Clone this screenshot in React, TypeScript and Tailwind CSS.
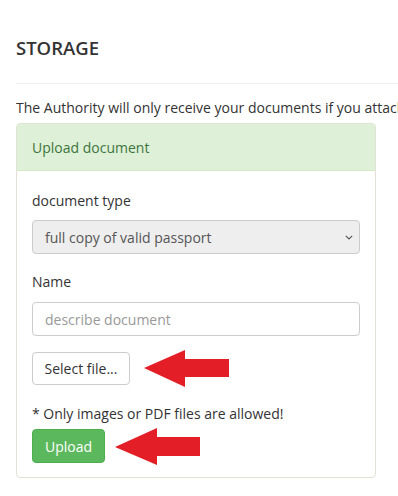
import React from "react";

export default function App() {
  return (
    <div
      className="w-[398px] h-[496px] overflow-hidden bg-white text-[#333]"
      style={{ fontFamily: '"Open Sans", "Liberation Sans", sans-serif' }}
    >
      <div className="pl-4">
        <h2 className="pt-[38px] text-[18.5px] leading-[19px] font-semibold text-[#333]">
          STORAGE
        </h2>
        <div className="mt-[26px] h-px bg-[#eeeeee] w-[400px]" />
        <p className="mt-[14px] text-[14px] leading-[20px] whitespace-nowrap w-[382px] overflow-hidden">
          The Authority will only receive your documents if you attach them to your application.
        </p>
        <div className="mt-[5px] w-[360px] border border-[#dfe3d3] rounded-[4px] overflow-hidden">
          <div className="h-[47px] bg-[#dff0d8] border-b border-[#d6e9c6] flex items-center px-[15px] text-[14px] text-[#3c763d]">
            Upload document
          </div>
          <div className="px-[15px] pt-[20px] pb-[14px] text-[14px]">
            <div className="leading-[20px]">document type</div>
            <div className="mt-[9px] h-[34px] rounded-[4px] border border-[#cccccc] bg-[#eeeeee] flex items-center justify-between pl-[12px] pr-[6px] text-[14px] text-[#555]">
              <span>full copy of valid passport</span>
              <svg width="8" height="5" viewBox="0 0 8 5" fill="none">
                <path d="M0.8 0.8l3.2 3.2L7.2 0.8" stroke="#555" strokeWidth="1.1" />
              </svg>
            </div>
            <div className="mt-[18px] leading-[20px]">Name</div>
            <div className="mt-[10px] h-[34px] rounded-[4px] border border-[#cccccc] bg-white flex items-center px-[12px] text-[14px] text-[#999]">
              describe document
            </div>
            <div className="relative mt-[16px] h-[33px]">
              <div className="h-[33px] w-[98px] rounded-[4px] border border-[#cccccc] bg-white flex items-center justify-center text-[14px] text-[#333]">
                Select file...
              </div>
              <svg
                className="absolute left-[112px] top-[-2px]"
                width="86"
                height="38"
                viewBox="0 0 86 38"
              >
                <polygon points="0,18 41,0 41,9 85,9 85,27 41,27 41,37" fill="#e41e26" />
              </svg>
            </div>
            <div className="mt-[19px] leading-[20px]">* Only images or PDF files are allowed!</div>
            <div className="relative mt-[5px] h-[34px]">
              <div className="h-[34px] w-[73px] rounded-[4px] border border-[#4cae4c] bg-[#5cb85c] flex items-center justify-center text-[14px] text-white">
                Upload
              </div>
              <svg
                className="absolute left-[83px] top-[-1px]"
                width="86"
                height="38"
                viewBox="0 0 86 38"
              >
                <polygon points="0,19 42,0 42,9 85,9 85,28 42,28 42,37" fill="#e41e26" />
              </svg>
            </div>
          </div>
        </div>
      </div>
    </div>
  );
}
